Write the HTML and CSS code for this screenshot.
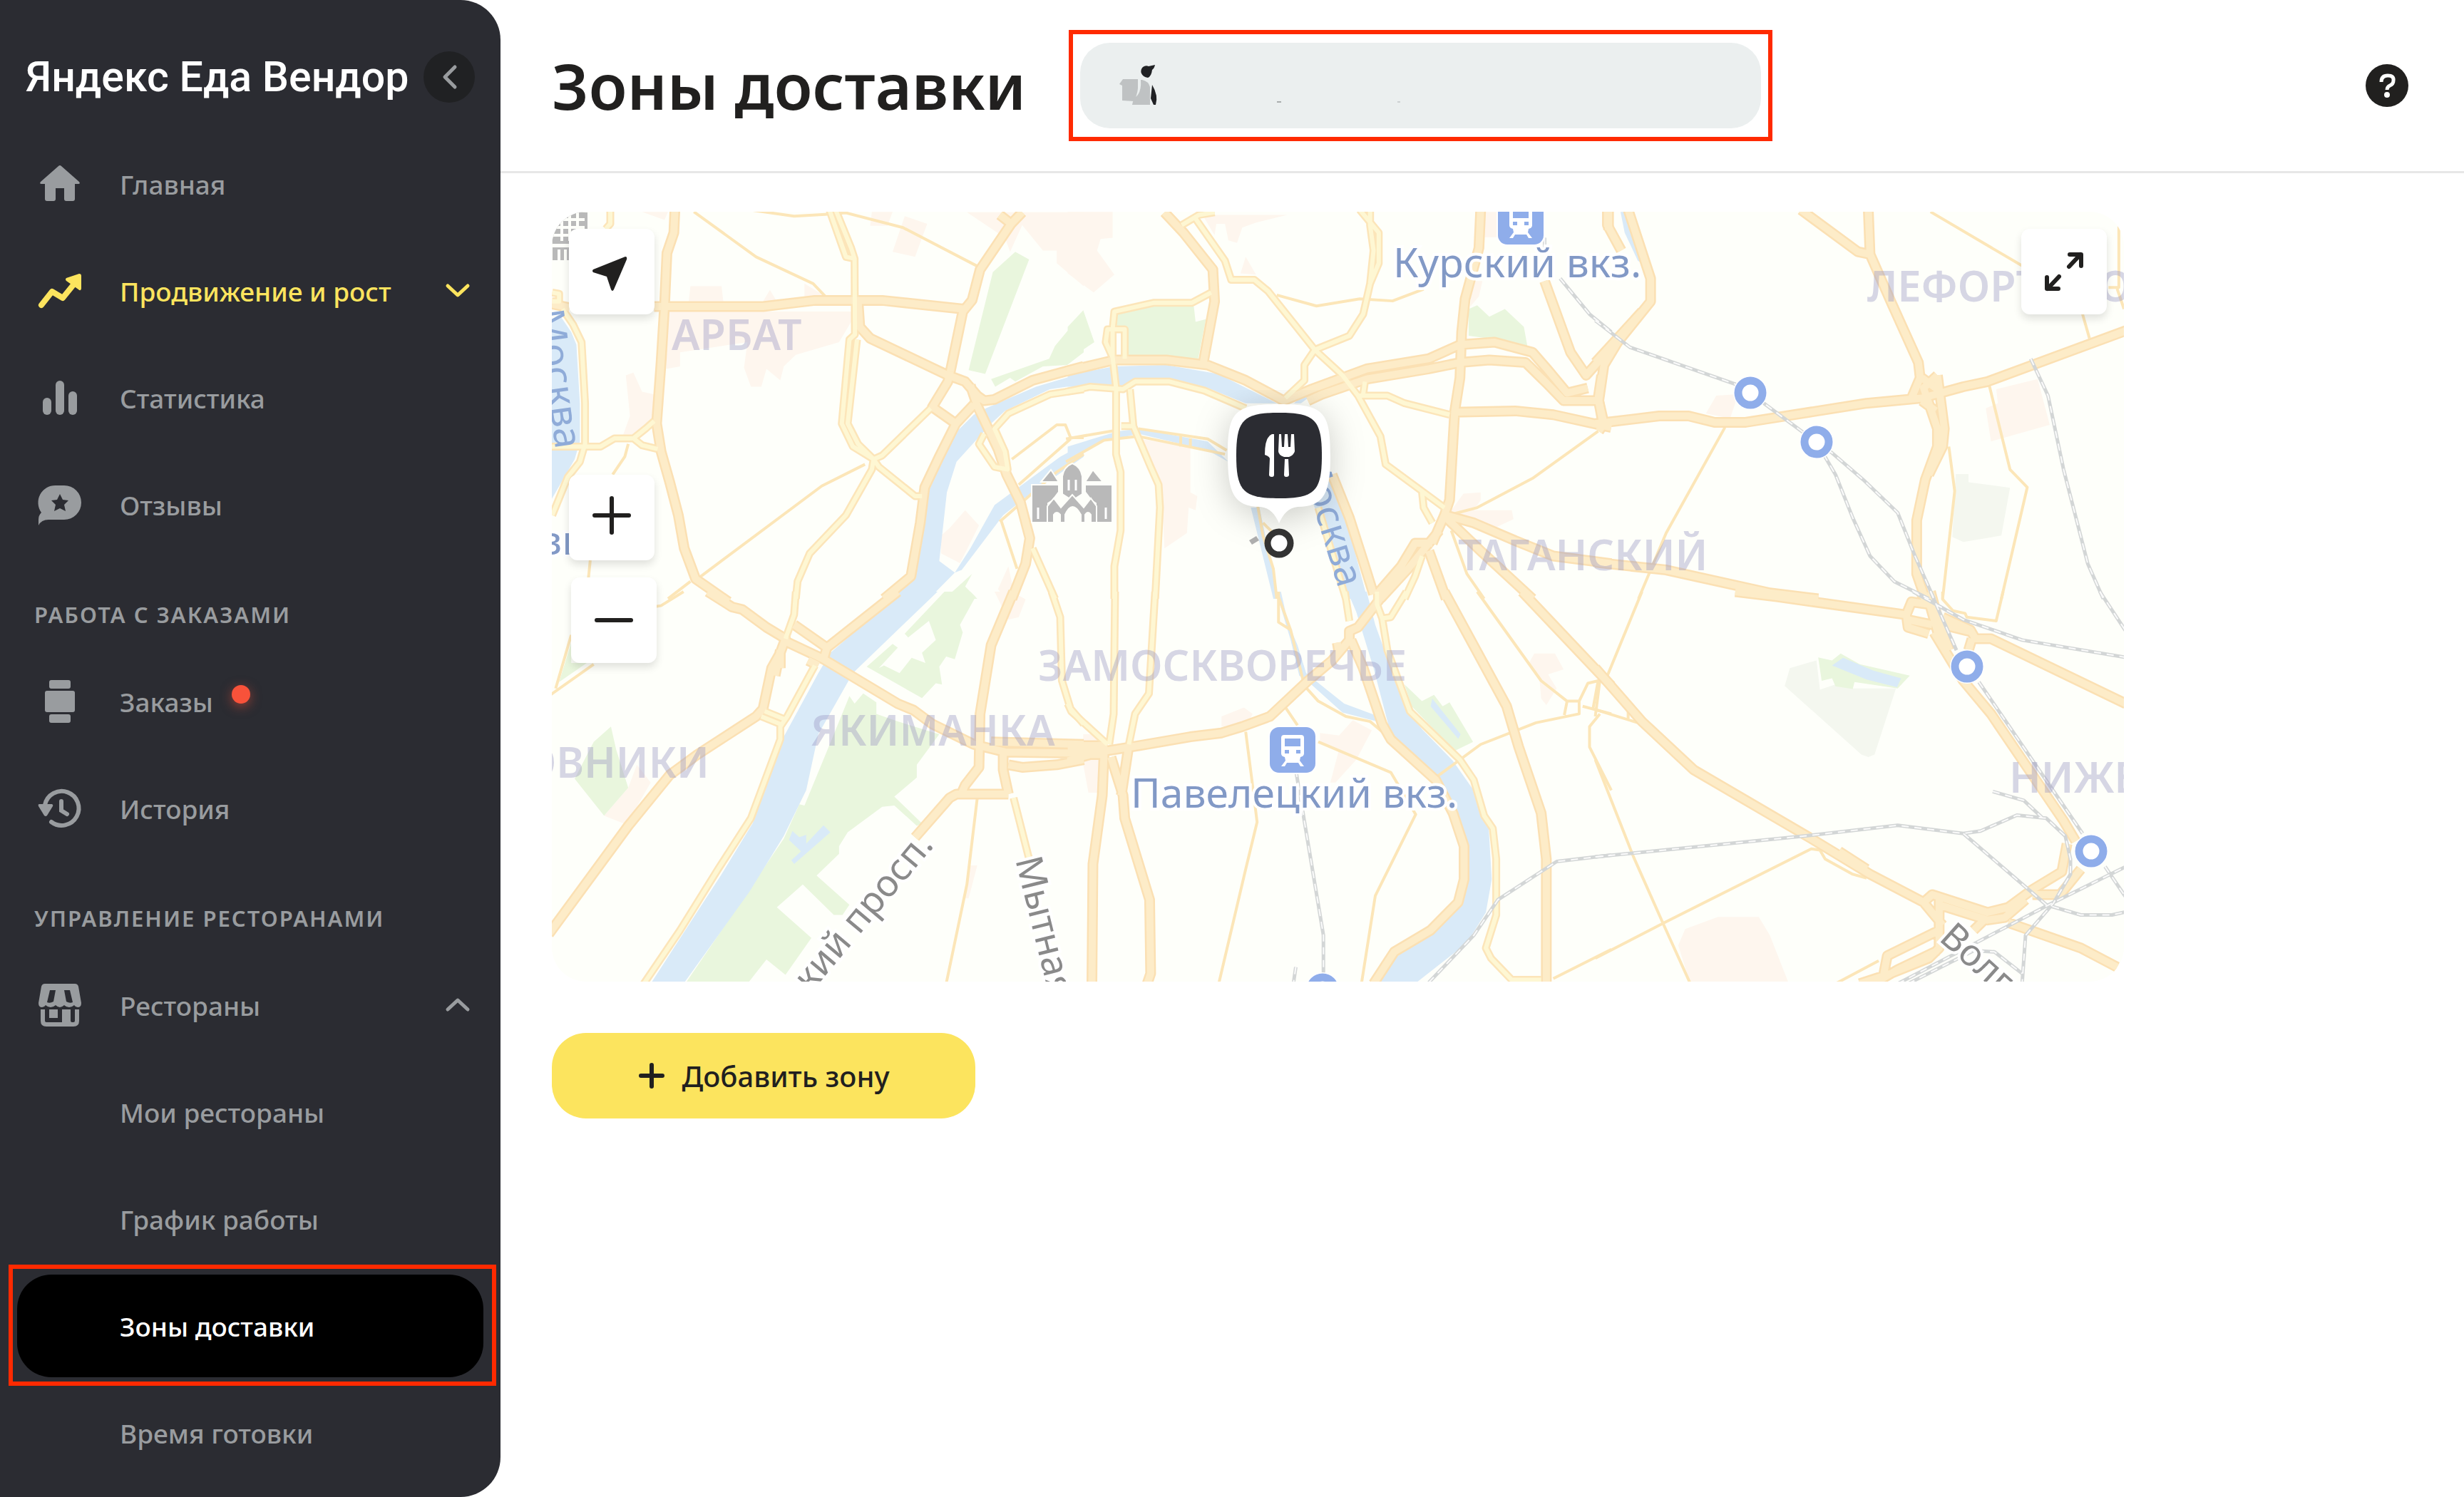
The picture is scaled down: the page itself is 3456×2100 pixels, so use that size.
FILE: index.html
```html
<!DOCTYPE html>
<html lang="ru">
<head>
	<meta charset="UTF-8">
	<title>Зоны доставки</title>
	<link rel="stylesheet" href="styles.css">
</head>
<body>
	<aside class="sidebar">
		<div class="brand">
			<span class="brand-name">Яндекс Еда Вендор</span>
			<button class="collapse" type="button" aria-label="Свернуть меню">
				<svg width="72" height="72" viewBox="0 0 72 72"><path class="line" d="M44 22L30 36L44 50"/></svg>
			</button>
		</div>
		<nav>
			<a class="item" href="#">
				<svg class="icon" viewBox="0 0 72 72"><path d="M34 11Q36 9 38 11L63 33Q65 36 62 36H57V57Q57 60 54 60H45Q42 60 42 57V42H30V57Q30 60 27 60H18Q15 60 15 57V36H10Q7 36 9 33Z"/></svg>
				Главная
			</a>
			<a class="item yellow" href="#">
				<svg class="icon" viewBox="0 0 72 72"><path d="M10 56L25 37L40 46L57 25" fill="none" stroke="currentColor" stroke-width="8" stroke-linecap="round" stroke-linejoin="round"/><path d="M45 18L63 12Q66 12 66 15V33Q65 37 62 34L45 22Q43 20 45 18Z"/></svg>
				Продвижение и рост
				<svg class="chevron" viewBox="0 0 36 24"><path class="line" d="M4 5L18 18L32 5"/></svg>
			</a>
			<a class="item" href="#">
				<svg class="icon" viewBox="0 0 72 72"><rect x="12" y="36" width="12" height="24" rx="6"/><rect x="30" y="12" width="12" height="48" rx="6"/><rect x="48" y="27" width="12" height="33" rx="6"/></svg>
				Статистика
			</a>
			<a class="item" href="#">
				<svg class="icon" viewBox="0 0 72 72"><path fill-rule="evenodd" d="M30 9H42A24 24 0 0 1 42 57H20Q10 57 6 65V57Q6 51 10 47A24 24 0 0 1 30 9ZM36 21L32 29L24 30L30 36L28 45L36 41L44 45L42 36L48 30L40 29Z"/></svg>
				Отзывы
			</a>
			<h2 class="section">РАБОТА С ЗАКАЗАМИ</h2>
			<a class="item" href="#">
				<svg class="icon" viewBox="0 0 72 72"><rect x="21" y="6" width="30" height="12" rx="3"/><rect x="15" y="21" width="42" height="30" rx="3"/><rect x="21" y="54" width="30" height="12" rx="3"/></svg>
				Заказы
				<span class="dot"></span>
			</a>
			<a class="item" href="#">
				<svg class="icon" viewBox="0 0 72 72"><path d="M15 31A24 24 0 1 1 24 55M38 26V39L46 44" fill="none" stroke="currentColor" stroke-width="6" stroke-linecap="round"/><path d="M7 30H25Q27 31 26 33L18 46Q16 48 14 46L6 33Q5 30 7 30Z"/></svg>
				История
			</a>
			<h2 class="section">УПРАВЛЕНИЕ РЕСТОРАНАМИ</h2>
			<a class="item" href="#">
				<svg class="icon" viewBox="0 0 72 72"><path fill-rule="evenodd" d="M15 6H57Q61 6 62 10L66 33Q66 39 61 39Q58 39 56 36Q53 39 49 39T42 36Q39 39 36 39T30 36Q27 39 23 39T16 36Q14 39 11 39Q6 39 6 33L10 10Q11 6 15 6ZM22 15L18 32Q22 34 27 31L30 15ZM42 15L45 31Q50 34 54 32L50 15ZM9 42H15V58Q15 60 17 60H39V42H51V58Q51 60 53 60H55Q57 60 57 58V42H63V58Q63 66 55 66H17Q9 66 9 58ZM21 42H33V54H21Z"/></svg>
				Рестораны
				<svg class="chevron" viewBox="0 0 36 24"><path class="line" d="M4 18L18 5L32 18"/></svg>
			</a>
			<a class="item sub" href="#">Мои рестораны</a>
			<a class="item sub" href="#">График работы</a>
			<a class="item sub active" href="#">Зоны доставки</a>
			<a class="item sub" href="#">Время готовки</a>
		</nav>
	</aside>

	<main>
		<header class="top">
			<h1>Зоны доставки</h1>
			<div class="frame">
				<button class="place" type="button" aria-label="Выбрать ресторан">
					<svg width="420" height="60" viewBox="0 0 420 60">
						<path fill="#bfc2c3" d="M6 21H27V34Q26 44 21 52L5 51V30L1 28ZM33 22Q42 24 44 32V57H19Q20 49 27 43Q32 36 31 22Z"/>
						<path fill="#202124" d="M34 4Q38 1 42 3L51 1Q50 6 47 8Q46 17 41 19Q34 18 32 13Q30 8 34 4ZM47 29Q56 44 52 57H49L45 48Z"/>
						<path fill="#a9adae" d="M222 52h6v2h-6z"/><path fill="#cdd1d2" d="M391 52h4v2h-4z"/>
					</svg>
				</button>
			</div>
			<button class="help" type="button" aria-label="Помощь">
				<svg width="60" height="60" viewBox="0 0 60 60"><circle cx="30" cy="30" r="30" fill="#21201f"/><path d="M22 25Q22 16 31 16T39 23Q39 28 34 30Q30 32 30 36" fill="none" stroke="#fff" stroke-width="5"/><circle cx="30" cy="43" r="4" fill="#fff"/></svg>
			</button>
		</header>

		<section class="content">
			<div class="map">
				<svg class="map-canvas" viewBox="774 297 2205 1080">
					<defs>
						<!-- тайлы: a b c сверху, d e f снизу -->
						<g id="major">
							<path transform="translate(760 280) scale(.4847 .3571)" d="M385 40L382 130L362 210L355 420L345 640L332 880L345 990L370 1110L395 1240L412 1370L445 1490L540 1580M325 420H640L790 396H985L1220 430M1390 50L1358 95L1268 275L1245 395L1218 440L1182 675M1325 60L1358 95M915 400L920 500L950 545L1175 690L1225 715L1260 770L1280 790L1310 785L1420 710L1568 655M1182 675L1175 715L1130 815L1198 880L1250 805M1198 880L1150 1010L1108 1130L1095 1270L1068 1480L990 1568M1240 730L1260 810L1320 980L1345 1080L1385 1190L1412 1330L1400 1430L1360 1568M30 410L80 425"/>
							<path transform="translate(1500 280) scale(.4847 .3571)" d="M275 50L330 130L415 275L420 400L388 635M-10 675L130 630L280 630L400 650L510 710L620 790L700 745L860 665L1040 625L1130 570L1230 560L1340 600L1385 670L1440 760L1500 740M1190 40L1185 190L1145 390L1135 520L1130 700L1115 830L1100 1180L1085 1240L1050 1350M1115 835L1290 830L1400 845L1568 895M1375 320L1450 600L1495 690L1568 580M1560 40V120M1545 890L1530 780L1540 690M690 790L730 765L860 705L1040 665L1130 640L1215 630L1320 640L1380 720L1430 790L1530 790M760 1080L810 1250L850 1420L880 1550M1090 1240L1170 1270L1290 1340L1400 1400L1568 1430M1090 1250L1190 1380L1340 1568M1050 1350L1000 1350L960 1440L890 1550M1070 1300L980 1450L900 1568M1040 1380L1090 1568"/>
							<path transform="translate(2240 280) scale(.4847 .3571)" d="M590 40L755 205L790 215M785 40L790 215L850 400L930 640L935 700L910 780M-5 880L180 850H265L340 875H430L780 800L940 780L1060 735L1130 715L1530 515M90 40L155 310V400L60 560L20 650L5 790L20 880L5 910M30 40V100L70 200M130 440L-5 640M985 690L945 740L985 900V970L950 1100L925 1260L925 1470L950 1568M985 690L1005 900L1000 970L960 1080M940 700L1000 760M940 790L980 830M-5 1425L200 1455L500 1545L640 1568"/>
							<path transform="translate(760 830) scale(.4847 .3571)" d="M480 0L550 60L580 70L650 140L705 185L690 240L665 300L640 460L620 490L450 640L370 720L250 920L20 1345M730 130L825 220L1030 0M825 220L815 265L705 195M815 265L1030 440L1075 465L1130 520L1250 600L1340 630L1568 635M1365 0L1300 210L1268 480L1265 690L1225 760L1215 790M1350 795H1200L1180 810L1080 965M1335 640V700L1350 795M1300 590L1568 600M1350 680L1390 690L1490 680L1568 660M690 230L675 330M690 240L690 300M770 270L800 290"/>
							<path transform="translate(1500 830) scale(.4847 .3571)" d="M915 0L835 140L810 155V190L760 270L690 350L580 490L500 530L440 555L350 570L200 605L110 625H-5M-5 605H110M-5 665L60 640H110M100 640L95 800L68 1070L65 1540M120 650L155 800L160 890L232 1210L235 1500L225 1540M170 620L150 800M775 200L780 240M815 190L850 300L905 520L930 580L1060 740L1110 870L1142 1000V1130L1125 1220L1045 1330L940 1415L880 1540M1085 0L1265 450L1300 610L1365 870L1380 1050V1540M1310 0L1568 370"/>
							<path transform="translate(2240 830) scale(.4847 .3571)" d="M400 0L520 20L890 90M-5 300L130 510L280 700L620 970L790 1110L945 1220L1000 1310M975 160L1060 350L1140 480L1260 720L1350 900L1385 980M935 0L965 60L990 180M965 0L985 100L1020 230M960 50L910 40L895 90L900 140L960 165M900 110L970 130M1000 100L1080 150L1095 185L1140 185L1530 440M1085 185L1075 230M1000 130L1090 160M1400 1090L1340 1190L1260 1190M1360 990L1345 1100L1260 1170L1190 1240L1130 1260L970 1190L945 1220M1240 1210L1180 1280L1130 1290L990 1230M990 1200V1400L960 1440L850 1500L760 1540M985 1410L870 1485L800 1540M990 1330L840 1430L830 1500M1120 1290L1090 1330M1190 1300L1400 1400L1505 1475M700 1020L780 1090"/>
						</g>
						<g id="mid">
							<path transform="translate(760 280) scale(.4847 .3571)" d="M198 40V95L185 115M832 40L880 225L905 232M850 40L895 190L905 232L906 530L890 550L868 880L900 970L960 1020L975 1050L1080 1165H1100M912 550L885 880L915 960L960 1020M1125 820L985 1005L960 1020L955 1060L880 1240L775 1390L740 1500L735 1568M60 430L90 490L115 560L125 800V960L110 1030L75 1090L30 1240M20 970H170L210 938H265L300 900L325 870M265 938L290 965L335 980M1568 745L1470 765L1350 840L1310 900L1340 990L1348 1060L1310 1050L1265 960L1280 920M1420 1370L1485 1568M30 365L50 370V400H30"/>
							<path transform="translate(1500 280) scale(.4847 .3571)" d="M365 75L450 240L468 315H535L575 360L710 590L790 690L835 770L900 930L915 1040L1020 1145L1085 1210M325 100L375 60L420 50M840 40L895 130L895 250L870 330L850 450L810 535L710 590L680 650V710L625 780M870 40V100L880 200L870 330M410 365L355 405H245L130 440L125 510V620L135 740V1000L148 1070V1300L130 1440V1568M160 625V510H110L105 560L125 620M-10 755L60 735L155 745L190 715H290L390 750L510 820M175 745L185 890L235 1050L258 1120L262 1210L248 1568M150 890H185M835 770L920 770L970 800L1100 845M855 715L850 765M1020 1145L1025 1210L1050 1270M1020 1400L1000 1480L970 1568M720 1210L800 1568"/>
							<path transform="translate(760 830) scale(.4847 .3571)" d="M735 0L730 90L705 185M790 290L770 340L710 490L690 530V580L605 890L510 1090L400 1330L295 1540M645 470L700 500M635 490L690 520M1475 0L1500 100L1505 350L1530 460L1568 520M1365 810L1410 1050"/>
							<path transform="translate(1500 830) scale(.4847 .3571)" d="M132 0L128 480L115 600M248 0L230 400L190 480L172 600M-5 440L5 470L110 600M797 0L810 115M975 0L930 100L905 105L890 50V0M905 105L920 230L985 470L1130 660L1170 740L1200 880L1225 930L1235 1050V1270L1205 1400L1220 1440L1280 1525H1365"/>
						</g>
						<g id="rail">
							<path transform="translate(1500 280) scale(.4847 .3571)" d="M1375 150V200M1420 310L1505 450L1568 520"/>
							<path transform="translate(2240 280) scale(.4847 .3571)" d="M-5 475L95 580L400 725L443 760L635 953L690 1080L740 1250L790 1400L860 1500L960 1568M635 953L680 995L770 1100L870 1230L920 1400L975 1568M1255 625L1305 770L1350 1060L1420 1430L1465 1568"/>
							<path transform="translate(1500 830) scale(.4847 .3571)" d="M655 700L735 1350V1500M655 1475L648 1540M1040 1535L1170 1350L1240 1210L1410 1060L1568 1035"/>
							<path transform="translate(2240 830) scale(.4847 .3571)" d="M-5 1042L600 960L870 918L1060 950L1110 940L1215 878L1300 890L1355 960L1370 1050V1110L1320 1225L1240 1350L1230 1540M1145 785L1235 820L1290 890M1060 950L1300 1230L1400 1270H1490L1530 1258M965 0L1040 230M1105 355L1405 950M915 0L1060 110L1230 190L1530 258M1455 0L1530 155M870 1540L1300 1235L1530 1080M1470 1080L1530 1200M900 1540L1090 1410L1150 1415L1230 1500"/>
						</g>
						<g id="station">
							<rect x="-34" y="-34" width="68" height="68" rx="14" fill="#fff"/>
							<rect x="-32" y="-32" width="64" height="64" rx="13" fill="#8fadea"/>
							<path fill="#fff" fill-rule="evenodd" d="M-12-21H12Q16-21 16-17V5Q16 9 11 10L10 15L16 23H11L8 18H-8L-11 23H-16L-10 15L-11 10Q-16 9-16 5V-17Q-16-21-12-21ZM-11-16V-5H11V-16ZM-11 0V5H-5V0ZM5 0V5H11V0Z"/>
						</g>
						<g id="stop">
							<circle r="24" fill="#fff"/>
							<circle r="17" fill="#fff" stroke="#8fadea" stroke-width="11"/>
						</g>
					</defs>

					<rect x="774" y="297" width="2205" height="1080" fill="#fefffa"/>

					<g class="quarter">
						<path transform="translate(760 280) scale(.4847 .3571)" d="M430 340H520L525 400H425ZM640 400L660 355L680 400ZM760 330L820 380H760ZM365 440H895V480L860 560L735 610L700 655L690 710L650 665L635 735H605L585 660L595 560L400 600V655L360 665ZM265 680L290 755L325 765L320 870L260 935L235 925L255 850L243 690ZM955 48H1015L1000 103H950ZM1050 65L1115 95L1080 225L1015 205ZM1230 50H1568V340L1490 250V200L1450 200L1390 100L1355 205L1340 150ZM1225 1220L1265 1280L1210 1428L1155 1390V1320L1180 1290ZM290 48H365L355 80ZM1350 1440L1320 1530L1340 1568H1370Z"/>
						<path transform="translate(1500 280) scale(.4847 .3571)" d="M-5 48H125V150L90 155L80 200L130 295L70 365L-5 290ZM385 60H630L540 90L500 110L485 170L460 160L450 95H425L420 140ZM510 225L540 295L495 290ZM200 940L350 965V1150L370 1165L365 1220L345 1210L340 1310L275 1370L265 1120ZM1140 1155L1190 1150V1180L1170 1220L1280 1220L1285 1255L1230 1290L1190 1280L1100 1230ZM1195 48H1240V148H1195ZM1165 320H1195L1185 380L1160 420Z"/>
						<path transform="translate(2240 280) scale(.4847 .3571)" d="M345 770L400 765V800L385 860L315 840ZM1155 745L1275 705L1310 885L1140 950L1125 820L1160 800Z"/>
						<path transform="translate(760 830) scale(.4847 .3571)" d="M275 680L315 750L245 915L180 880L250 770ZM1310 0H1360L1400 30L1380 100L1350 110ZM1240 1075H1260L1235 1205H1220Z"/>
						<path transform="translate(1500 830) scale(.4847 .3571)" d="M505 455L530 480L515 520L440 530V490ZM820 505L875 545L830 660L770 750H755L780 620L725 590V555L780 565ZM1345 243H1405L1430 305L1385 325L1410 380L1380 445L1365 420L1360 340L1330 280ZM40 560H90V690L80 790H55L40 680Z"/>
						<path transform="translate(2240 830) scale(.4847 .3571)" d="M350 1278H468L500 1350L555 1540H270L235 1390L255 1325Z"/>
					</g>

					<g class="pale">
						<path transform="translate(2240 280) scale(.4847 .3571)" d="M1038 1078H1075V1110L1195 1132L1170 1320L1060 1345L1028 1325Z"/>
						<path transform="translate(2240 830) scale(.4847 .3571)" d="M635 270L645 385L700 360L740 380H865L803 640L785 650L765 640L543 370L558 300Z"/>
					</g>

					<g class="park">
						<path transform="translate(760 280) scale(.4847 .3571)" d="M1370 205L1410 235L1283 685L1235 670L1305 285ZM1568 440L1485 575L1468 625L1300 705L1312 735L1355 700L1370 715L1450 655L1520 650L1568 600ZM1245 1470L1165 1568H1260L1225 1520Z"/>
						<path transform="translate(1500 280) scale(.4847 .3571)" d="M135 450L250 415L360 420L365 480L395 470L372 628L165 615L160 500H135ZM-5 500L40 435L72 560L-5 630ZM1155 430L1180 415L1215 460L1260 430L1315 500L1325 575L1240 550L1155 535Z"/>
						<path transform="translate(760 830) scale(.4847 .3571)" d="M1165 0H1240L1255 20L1210 130L1218 160L1195 265L1170 255L1150 295L1158 365L1140 360L1100 418L940 295L1015 205L1030 220L975 300L990 290L1035 320L1070 260L1110 280L1100 240L1140 190L1120 115L1060 180L1050 165ZM890 410L905 440L930 400L968 435V480L1030 510L1150 560L1085 680V730L1020 805L1100 910L1085 920L1020 840L985 845L885 945L860 1000V1030L795 1115L890 1230L870 1270H845L755 1150L680 1240L780 1360L705 1505L650 1445L595 1540H415L700 970L745 835L760 840L830 610ZM200 530L215 620L250 770L180 880L95 735L150 590ZM85 200V280H130L50 355Z"/>
						<path transform="translate(1500 830) scale(.4847 .3571)" d="M970 365L1020 430L1055 405L1080 450L1100 435L1168 590L1115 625L990 450Z"/>
						<path transform="translate(2240 830) scale(.4847 .3571)" d="M640 258L680 270L705 243L760 285L905 330L870 380L745 355L740 382L690 372L680 340L650 350Z"/>
					</g>

					<g class="water">
						<path transform="translate(760 280) scale(.4847 .3571)" d="M10 490L50 450L85 520L100 570L110 800V950L95 1020L10 1220ZM1568 680L1430 735L1285 820L1250 845L1205 905L1115 1130L1075 1480L1010 1568H1120L1195 1465L1150 1420L1172 1150L1200 1030L1280 910L1300 880L1340 830L1470 745L1568 725ZM1195 1465L1215 1455L1335 1240L1400 1170L1568 1010V960L1500 1010L1420 1090L1310 1200L1240 1370Z"/>
						<path transform="translate(1500 280) scale(.4847 .3571)" d="M-5 690L130 655L280 650L430 685L600 800H510L400 740L290 710H190L150 740L-5 735ZM-5 970L140 910L200 900L400 950L460 1030L400 985L200 920L100 950L-5 1015ZM690 1150L760 1100L800 1250L862 1568H810L740 1300ZM650 800L680 760L720 750L670 800ZM525 1210H550L605 1568H590Z"/>
						<path transform="translate(2240 280) scale(.4847 .3571)" d="M68 48H88L130 250L118 240L80 130Z"/>
						<path transform="translate(760 830) scale(.4847 .3571)" d="M1040 0L835 240L800 320L700 570L610 910L520 1110L315 1540H410L600 1180L700 960L765 780L800 560L900 320L1145 0ZM815 918L835 945L730 1070L722 1055L750 1020L715 975L725 940L745 965L765 955V990Z"/>
						<path transform="translate(1500 830) scale(.4847 .3571)" d="M805 0H860L885 130L930 300L975 460L1020 540L1110 665L1180 800L1212 900L1222 1130L1205 1260L1150 1380L1000 1540H890L940 1440L1050 1340L1130 1230L1155 1130V1000L1120 860L1060 730L930 560L880 300L830 80ZM598 0H612L632 120L660 210L685 320L740 380L795 440L885 485L890 510L790 475L700 365L665 330L640 190ZM1050 420L1132 560L1125 578L1045 450Z"/>
						<path transform="translate(2240 830) scale(.4847 .3571)" d="M712 260L800 310L880 340L868 375L780 345L680 290Z"/>
					</g>

					<g class="minor">
						<path transform="translate(760 280) scale(.4847 .3571)" d="M440 48L620 225L785 330L820 380M600 40L730 65L820 58L880 52L1045 110L1265 265M935 1040L810 1125L455 1485M250 960L240 1010L205 1080M140 1417L135 1485M430 1500L365 1568M1360 1020L1490 885H1515L1530 935H1568M1530 940L1380 1120M1330 1265L1375 1450M1568 1000L1490 1070L1325 1265"/>
						<path transform="translate(1500 280) scale(.4847 .3571)" d="M600 375L715 418L840 390L935 398L1025 352M1530 910L1340 1095L1180 1210L1110 1235M-10 940L140 905M-10 1030L100 945L200 930L450 1000M200 900L400 940L455 985M322 930V970M350 938V973M1105 1300L1150 1470L1200 1568M545 1205L560 1320L590 1450L600 1568M560 1270L590 1310"/>
						<path transform="translate(2240 280) scale(.4847 .3571)" d="M965 48L1230 260M1510 105V345H1480M1505 350L1525 430M1405 450L1425 545M370 895L200 1310L120 1568M1135 730L1195 1060L1245 1130L1170 1568M1018 970L1035 1145L1000 1568"/>
						<path transform="translate(760 830) scale(.4847 .3571)" d="M410 0L345 55L330 58M85 170L40 380M20 410L150 285M1260 810L1230 1150L1170 1540"/>
						<path transform="translate(1500 830) scale(.4847 .3571)" d="M605 0V120L640 150L680 370L720 430L800 490L870 510L905 550M605 20L640 150M1060 730L1190 600L1350 515L1475 480V430H1440L1365 350L1180 0M1440 430L1432 485M1475 430L1500 360L1530 350L1515 460M1485 450L1568 480M1535 480L1505 530V610L1568 780M625 455L660 525M510 550L528 740L543 905L510 1090L432 1540M720 590L930 710L1002 875L885 1195L845 1540M1400 1520L1568 1405"/>
						<path transform="translate(2240 830) scale(.4847 .3571)" d="M130 0L30 330M10 330L-5 490M-5 660L105 1040L190 1300L270 1540M-5 1440L195 1300L620 1010L645 1015L660 1050L740 1110L780 1125M0 465L130 520M90 460V500M1000 0V30L1030 75L1065 85L1070 100L1155 115L1175 0M690 1540L815 1450"/>
					</g>

					<use href="#major" class="major-edge"/>
					<use href="#mid" class="mid-edge"/>
					<use href="#major" class="major"/>
					<use href="#mid" class="mid"/>
					<use href="#rail" class="rail"/>
					<use href="#rail" class="rail-dash"/>

					<!-- здания -->
					<g fill="#b9b9b9" stroke="#fefffa" stroke-width="2">
						<path d="M774 297H825V343H774ZM774 346H825V358H820V366H774Z"/>
						<path d="M1447 680H1485V690L1476 702L1470 706V733H1447ZM1560 680H1522V690L1531 702L1537 706V733H1560Z"/>
						<path d="M1460 676L1474 659L1485 676ZM1547 676L1533 659L1522 676ZM1490 693V668Q1492 655 1504 650Q1516 655 1518 668V693L1504 702Z"/>
						<path d="M1469 733V710L1478 699L1488 712L1504 694L1520 712L1530 699L1538 710V733H1530V722Q1526 716 1522 722V733H1516V722Q1504 700 1494 722V733H1487V722Q1482 716 1478 722V733Z"/>
					</g>
					<path stroke="#fefffa" stroke-width="4" d="M785 308H820M779 319H820M776 330H820M788 305V338M799 298V338M810 298V338M784 350V366M793 350V366"/>
					<path stroke="#fff" stroke-width="3" d="M1499 673V688M1509 673V688M1456 712V728M1551 712V728"/>

					<use href="#station" x="2133" y="311"/>
					<use href="#station" x="1813" y="1052"/>
					<use href="#stop" x="2455" y="551"/>
					<use href="#stop" x="2548" y="620"/>
					<use href="#stop" x="2759" y="935"/>
					<use href="#stop" x="2933" y="1194"/>
					<use href="#stop" x="1855" y="1388"/>

					<g class="district">
						<text x="942" y="491">АРБАТ</text>
						<text x="2619" y="423">ЛЕФОРТОВО</text>
						<text x="2045" y="800">ТАГАНСКИЙ</text>
						<text x="1456" y="955">ЗАМОСКВОРЕЧЬЕ</text>
						<text x="1137" y="1046">ЯКИМАНКА</text>
						<text x="995" y="1091" text-anchor="end">ОВНИКИ</text>
						<text x="2818" y="1112">НИЖЕ</text>
					</g>
					<g class="station-name">
						<text x="1954" y="389">Курский вкз.</text>
						<text x="1586" y="1133">Павелецкий вкз.</text>
						<text x="756" y="778">вы</text>
					</g>
					<g class="river-name">
						<text transform="translate(752 436) rotate(82)">Москва</text>
						<text transform="translate(1820 638) rotate(73)">Москва</text>
					</g>
					<g class="street-name">
						<text transform="translate(1311 1186) rotate(-50)" text-anchor="end">кий просп.</text>
						<text transform="translate(1424 1206) rotate(76)">Мытная</text>
						<text transform="translate(2718 1318) rotate(42)">Волг</text>
					</g>
				</svg>

				<svg class="pin" width="240" height="260" viewBox="1674 547 240 260">
					<path fill="#b0b0b0" d="M1752 758L1762 752L1766 758L1756 764Z"/>
					<path class="bubble" d="M1722 639C1722 577 1732 567 1794 567S1866 577 1866 639C1866 690 1858 711 1820 711C1806 713 1800 721 1794 734C1788 721 1782 713 1768 711C1730 711 1722 690 1722 639Z"/>
					<path fill="#2b2c32" d="M1734 639C1734 589 1744 579 1794 579S1854 589 1854 639S1844 699 1794 699S1734 689 1734 639Z"/>
					<path fill="#fff" d="M1787 609V666Q1787 669 1784 669Q1780 669 1780 666L1781 643Q1780 640 1774 638Q1774 613 1784 609ZM1794 609H1797L1798 627H1801L1802 609H1806L1807 627H1810L1811 609H1815L1816 633Q1815 638 1808 641H1801Q1793 638 1793 633ZM1802 644H1807L1808 666Q1808 669 1804 669Q1801 669 1801 666Z"/>
					<circle cx="1794" cy="762" r="16" fill="#fff" stroke="#333" stroke-width="9"/>
				</svg>

				<button class="control locate" type="button" aria-label="Моё местоположение">
					<svg viewBox="0 0 120 120"><path fill="#21201f" d="M34 57L79 39Q82 39 81 43L63 85Q61 89 59 85L53 67L34 61Q32 59 34 57Z"/></svg>
				</button>
				<button class="control zoom-in" type="button" aria-label="Приблизить">
					<svg viewBox="0 0 120 120"><path class="sign" d="M60 33V81M36 57H84"/></svg>
				</button>
				<button class="control zoom-out" type="button" aria-label="Отдалить">
					<svg viewBox="0 0 120 120"><path class="sign" d="M36 60H84"/></svg>
				</button>
				<button class="control fullscreen" type="button" aria-label="На весь экран">
					<svg viewBox="0 0 120 120"><path class="sign" d="M67 53L83 36M68 36H84V52M53 67L37 84M36 68V84H52"/></svg>
				</button>
			</div>

			<button class="add" type="button">
				<svg width="38" height="38" viewBox="0 0 38 38"><path stroke="#21201f" stroke-width="6" stroke-linecap="round" d="M19 4V34M4 19H34"/></svg>
				Добавить зону
			</button>
		</section>
	</main>
</body>
</html>
```
FILE: styles.css
```css
* { box-sizing: border-box; }
body { margin: 0;min-height: 100vh;display: flex;background: #fff;font-family: "Noto Sans", "Open Sans", sans-serif;font-size: 37px;font-weight: 500;color: #21201f; }
button { border: 0;padding: 0;font: inherit;color: inherit;cursor: pointer; }
svg { display: block; }

.sidebar { flex: 0 0 702px;min-width: 0;background: #2b2c32;border-radius: 0 56px 56px 0;color: #999c9f; }
.brand { display: flex;align-items: center;justify-content: space-between;height: 186px;padding: 30px 36px 0; }
.brand-name { font-family: "Roboto", sans-serif;font-size: 59px;line-height: 72px;color: #fff;white-space: nowrap; }
.collapse { flex: none;width: 72px;height: 72px;border-radius: 50%;background: #202123;color: #999c9f; }
.line { fill: none;stroke: currentColor;stroke-width: 5;stroke-linecap: round;stroke-linejoin: round; }

.item { position: relative;display: flex;align-items: center;height: 144px;margin: 0 24px 6px;padding: 0 18px 0 24px;border-radius: 48px;color: inherit;text-decoration: none;white-space: nowrap; }
.icon { width: 72px;height: 72px;margin-right: 48px;fill: currentColor; }
.chevron { width: 36px;height: 24px;margin-left: auto; }
.yellow { color: #fce45e; }
.section { height: 126px;margin: 0;padding: 52px 48px 0;font-size: 31px;line-height: 48px;font-weight: 600;letter-spacing: 2px; }
.dot { width: 26px;height: 26px;margin: 0 0 20px 26px;border-radius: 50%;background: #f8523a;box-shadow: 0 4px 16px rgba(248,82,58,.5); }
.sub { padding-left: 144px; }
.active { background: #000;color: #fff; }
.active::after { content: "";position: absolute;top: -14px;right: -18px;bottom: -12px;left: -12px;border: 6px solid #ff2a00; }

main { flex: 1;min-width: 0; }
.top { display: flex;align-items: center;height: 243px;padding: 0 78px 0 72px;border-bottom: 3px solid #e7e7e7; }
h1 { margin: 0;font-size: 88px;line-height: 120px;font-weight: 600;white-space: nowrap; }
.frame { flex: 0 1 987px;margin-left: 60px;padding: 12px 10px;border: 6px solid #ff2a00; }
.place { display: flex;align-items: center;width: 100%;height: 120px;padding-left: 54px;border-radius: 42px;background: #ebefef; }
.help { width: 60px;height: 60px;margin-left: auto;border-radius: 50%;background: none; }

.content { padding: 54px 72px; }
.map { position: relative;max-width: 2205px;aspect-ratio: 49 / 24;border-radius: 48px;overflow: hidden; }
.map-canvas { width: 100%;height: 100%; }
.map-canvas path { vector-effect: non-scaling-stroke; }
.quarter { fill: #fef6ee; }
.pale { fill: #f4f7ef; }
.park { fill: #e9f6dd; }
.water { fill: #d9eaf8; }
.major-edge, .mid-edge, .major, .mid, .minor, .rail, .rail-dash { fill: none;stroke-linejoin: round; }
.major-edge { stroke: #fbe0b3;stroke-width: 15px; }
.major { stroke: #fdecc8;stroke-width: 10px; }
.mid-edge { stroke: #fce5b9;stroke-width: 11px; }
.mid { stroke: #fef7d3;stroke-width: 6px; }
.minor { stroke: #fce6b8;stroke-width: 4px; }
.rail { stroke: #d3d6d6;stroke-width: 5px; }
.rail-dash { stroke: #fafafa;stroke-width: 2px;stroke-dasharray: 10px 8px; }
.district { font-size: 59px;font-weight: 600;fill: #9a98c4;fill-opacity: .4; }
.station-name { font-size: 57px;font-weight: 400;fill: #8299c6;stroke: #fff;stroke-width: 8px;paint-order: stroke; }
.river-name { font-size: 54px;font-weight: 400;fill: #8fabd8; }
.street-name { font-size: 52px;font-weight: 400;fill: #8a8a8a;stroke: #fff;stroke-width: 8px;paint-order: stroke; }

.pin { position: absolute;top: 250px;left: 900px; }
.bubble { fill: #fff;filter: drop-shadow(0 8px 24px rgba(0,0,0,.2)); }
.control { position: absolute;width: 120px;height: 120px;border-radius: 12px;background: #fff;box-shadow: 0 6px 12px rgba(0,0,0,.12); }
.sign { fill: none;stroke: #21201f;stroke-width: 6;stroke-linecap: round;stroke-linejoin: round; }
.locate { top: 24px;left: 24px; }
.zoom-in { top: 369px;left: 24px; }
.zoom-out { top: 513px;left: 27px; }
.fullscreen { top: 24px;right: 24px; }

.add { display: flex;align-items: center;justify-content: center;gap: 24px;width: 594px;height: 120px;margin-top: 72px;border-radius: 48px;background: #fce45e;font-size: 40px; }
```
